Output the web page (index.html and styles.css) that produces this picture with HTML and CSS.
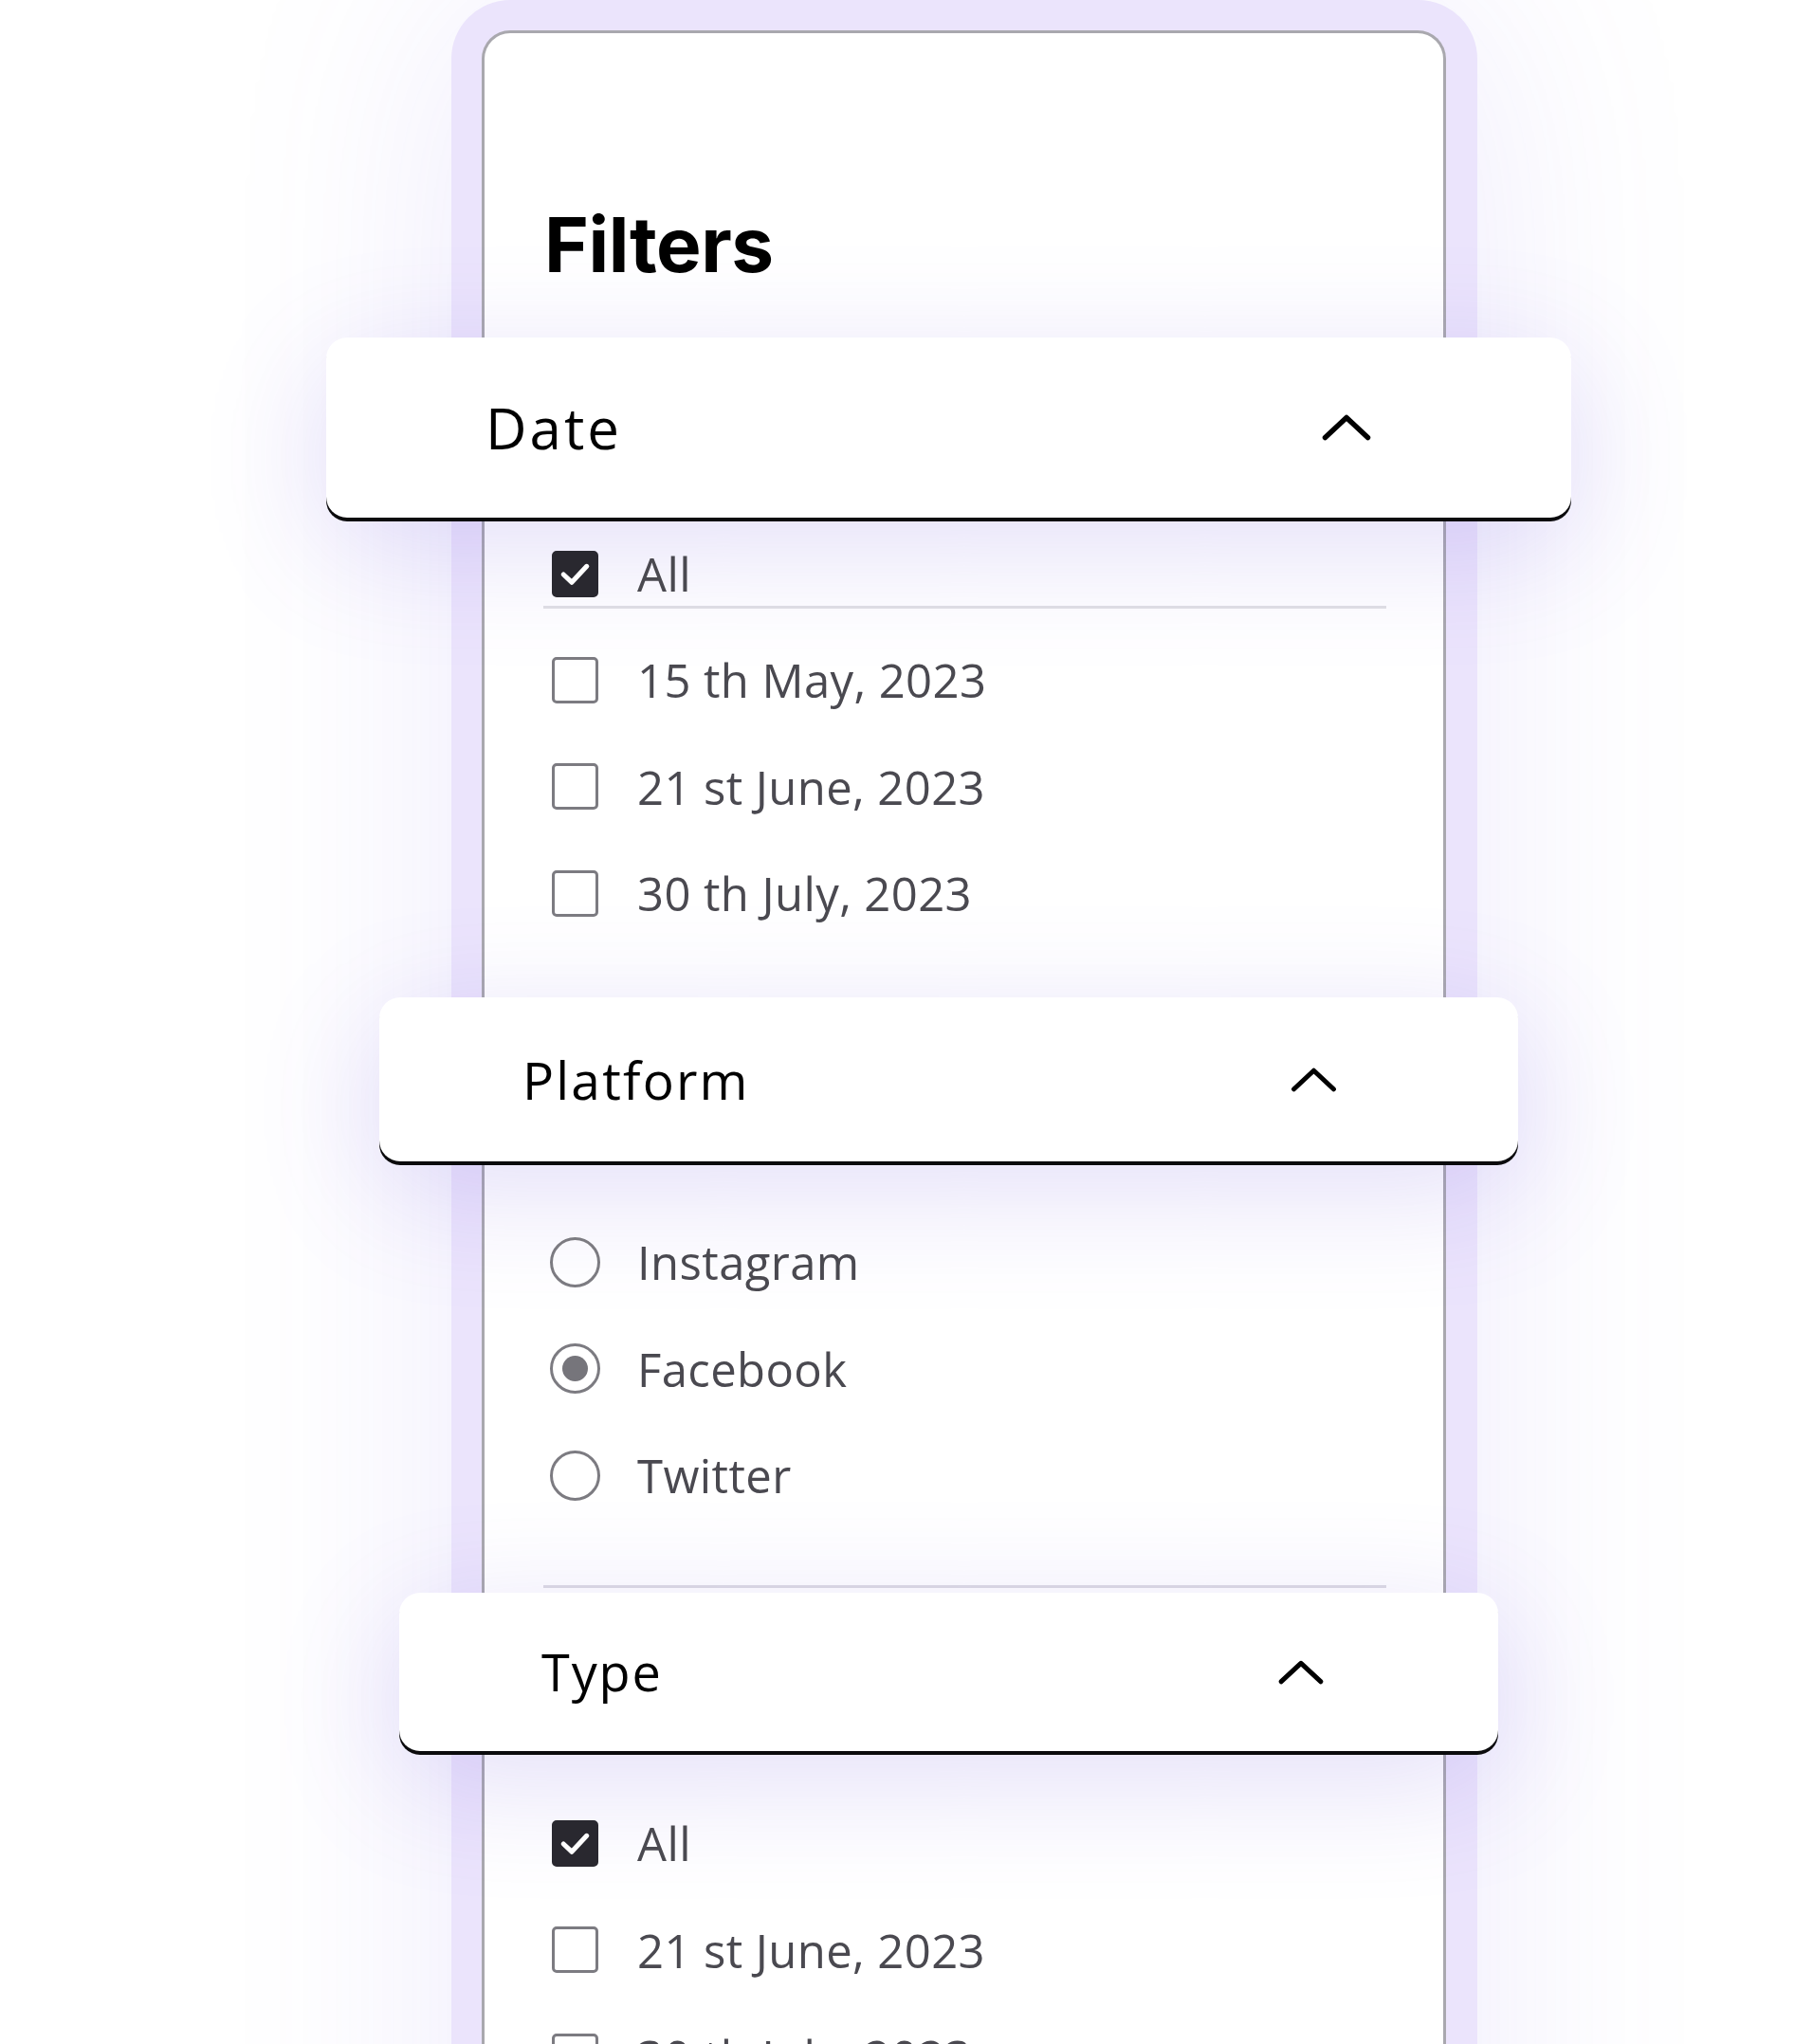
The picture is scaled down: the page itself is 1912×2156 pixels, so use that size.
FILE: index.html
```html
<!DOCTYPE html>
<html lang="en">
<head>
<meta charset="utf-8">
<title>Filters</title>
<link rel="stylesheet" href="styles.css">
</head>
<body>
<div class="stage">
  <div class="phone">
    <div class="screen">
      <h1 class="title">Filters</h1>

      <section class="group">
        <div class="head head-date">
          <span class="label">Date</span>
          <svg class="chev chev-lg" viewBox="0 0 52 28" aria-hidden="true"><path d="M3.5 24.5 L26 3.5 L48.5 24.5"/></svg>
        </div>
        <ul class="opts opts-date">
          <li class="opt opt-first"><span class="ctl"><span class="cb cb-on"><svg viewBox="0 0 48 48"><path d="M12 24.5 L20.5 32.5 L36 16"/></svg></span></span><span class="txt">All</span></li>
          <li class="opt"><span class="ctl"><span class="cb"></span></span><span class="txt">15 th May, 2023</span></li>
          <li class="opt"><span class="ctl"><span class="cb"></span></span><span class="txt">21 st June, 2023</span></li>
          <li class="opt"><span class="ctl"><span class="cb"></span></span><span class="txt">30 th July, 2023</span></li>
        </ul>
      </section>

      <section class="group">
        <div class="head head-platform">
          <span class="label">Platform</span>
          <svg class="chev chev-md" viewBox="0 0 52 28" aria-hidden="true"><path d="M3.5 24.5 L26 3.5 L48.5 24.5"/></svg>
        </div>
        <ul class="opts opts-platform">
          <li class="opt"><span class="ctl"><span class="rb"></span></span><span class="txt">Instagram</span></li>
          <li class="opt"><span class="ctl"><span class="rb rb-on"></span></span><span class="txt">Facebook</span></li>
          <li class="opt"><span class="ctl"><span class="rb"></span></span><span class="txt">Twitter</span></li>
        </ul>
        <div class="rule"></div>
      </section>

      <section class="group">
        <div class="head head-type">
          <span class="label">Type</span>
          <svg class="chev chev-sm" viewBox="0 0 52 28" aria-hidden="true"><path d="M3.5 24.5 L26 3.5 L48.5 24.5"/></svg>
        </div>
        <ul class="opts opts-type">
          <li class="opt"><span class="ctl"><span class="cb cb-on"><svg viewBox="0 0 48 48"><path d="M12 24.5 L20.5 32.5 L36 16"/></svg></span></span><span class="txt">All</span></li>
          <li class="opt"><span class="ctl"><span class="cb"></span></span><span class="txt">21 st June, 2023</span></li>
          <li class="opt"><span class="ctl"><span class="cb"></span></span><span class="txt">30 th July, 2023</span></li>
        </ul>
      </section>
    </div>
  </div>
</div>
</body>
</html>
```

FILE: styles.css
```css
html, body {
  margin: 0;
  padding: 0;
  height: 2156px;
  overflow: hidden;
  background: #ffffff;
}

body {
  font-family: "Open Sans", "Noto Sans", sans-serif;
}

.stage {
  padding-left: 476px;
}

.phone {
  width: 1082px;
  box-sizing: border-box;
  padding: 32px 33px 0 32px;
  background: #ebe4fc;
  border-radius: 62px 62px 0 0;
  box-shadow: 0 0 240px rgba(125, 100, 230, 0.13);
  min-height: 2500px;
}

.screen {
  border: 3px solid #a9a8ae;
  border-bottom: 0;
  border-radius: 30px 30px 0 0;
  background: #ffffff;
  min-height: 2460px;
}

.title {
  margin: 183px 0 58px 63px;
  font-family: Inter, "Liberation Sans", sans-serif;
  font-weight: 700;
  font-size: 80px;
  line-height: 80px;
  letter-spacing: -0.5px;
  color: #000000;
}

.head {
  display: flex;
  align-items: center;
  justify-content: space-between;
  box-sizing: border-box;
  background: #ffffff;
  border-radius: 22px;
  box-shadow: 0 4px 0 #0b0b0d, 0 30px 130px rgba(110, 86, 222, 0.2);
  color: #000000;
}

.label {
  font-weight: 520;
  line-height: 1.2;
}

.head-date {
  height: 190px;
  margin: 0 -135px 0 -167px;
  padding: 0 211px 0 168px;
}

.head-date .label {
  font-size: 60px;
  letter-spacing: 3px;
}

.head-platform {
  height: 173px;
  margin: 53.5px -79px 0 -111px;
  padding: 0 191px 0 151px;
}

.head-platform .label {
  font-size: 55px;
  letter-spacing: 2.2px;
}

.head-type {
  height: 167px;
  margin: 0 -58px 0 -90px;
  padding: 0 184px 0 150px;
}

.head-type .label {
  font-size: 54px;
  letter-spacing: 1.9px;
}

.chev {
  display: block;
  fill: none;
  stroke: #000000;
  stroke-width: 5.5;
  stroke-linecap: round;
  stroke-linejoin: round;
}

.chev-lg { width: 52px; height: 28px; }
.chev-md { width: 49px; height: 26px; }
.chev-sm { width: 48px; height: 26px; }

.opts {
  list-style: none;
  margin: 0;
  padding: 25px 60px 0 62px;
}

.opts-platform { padding-top: 50px; }
.opts-type { padding-top: 41px; }

.opt {
  display: flex;
  align-items: center;
  height: 112.5px;
  padding-left: 6px;
  font-size: 49px;
  font-weight: 500;
  letter-spacing: 0.4px;
  color: #4a4950;
}

.opt-first {
  height: 68px;
  border-bottom: 3px solid #dddce3;
  margin-bottom: 19px;
}

.ctl {
  flex: none;
  width: 54px;
  height: 54px;
  margin-right: 39px;
  display: flex;
  align-items: center;
  justify-content: center;
}

.cb {
  width: 49px;
  height: 49px;
  box-sizing: border-box;
  border: 3.5px solid #7c7b81;
  border-radius: 5px;
}

.cb-on {
  background: #29282f;
  border-color: #29282f;
  display: flex;
  align-items: center;
  justify-content: center;
}

.cb-on svg {
  width: 49px;
  height: 49px;
  flex: none;
  margin: -3.5px;
  fill: none;
  stroke: #ffffff;
  stroke-width: 5;
  stroke-linecap: round;
  stroke-linejoin: round;
}

.rb {
  width: 53px;
  height: 53px;
  box-sizing: border-box;
  border: 3.8px solid #7c7b81;
  border-radius: 50%;
  display: flex;
  align-items: center;
  justify-content: center;
}

.rb-on::after {
  content: "";
  width: 27px;
  height: 27px;
  border-radius: 50%;
  background: #76757b;
}

.rule {
  height: 3px;
  background: #dddce3;
  margin: 59.5px 60px 5px 62px;
}
```
